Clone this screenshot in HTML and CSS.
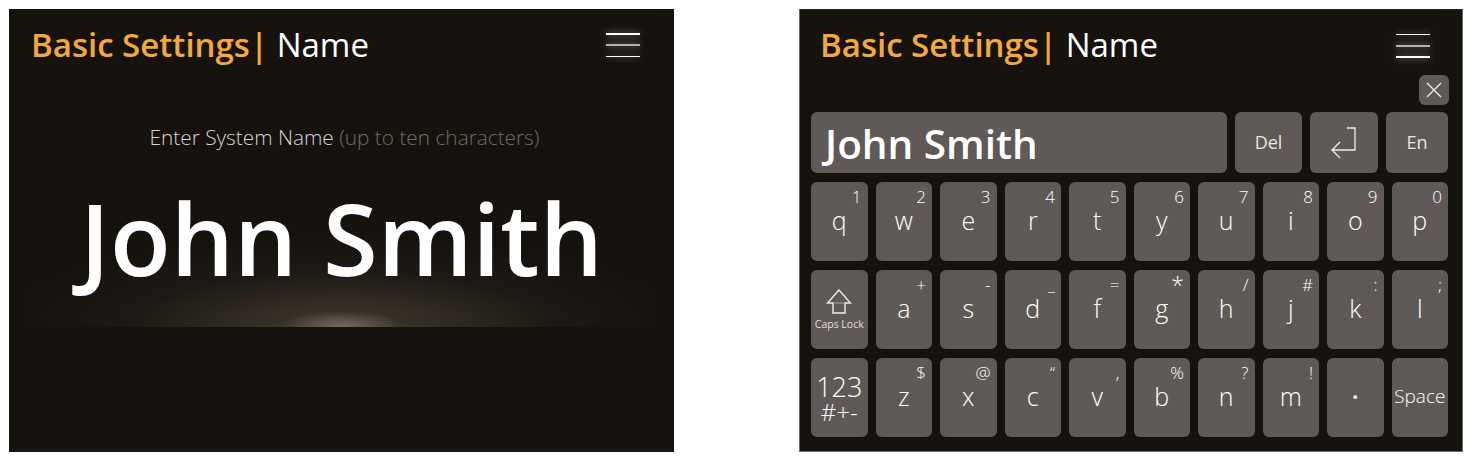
FILE: index.html
```html
<!DOCTYPE html>
<html lang="en">
<head>
    <meta charset="UTF-8">
    <title>Basic Settings - Name</title>
    <link rel="stylesheet" href="styles.css">
</head>
<body>
    <!-- Name preview screen -->
    <div class="panel panel-preview">
        <div class="header">
            <h1><span class="crumb">Basic Settings</span><span class="crumb-bar">|</span> Name</h1>
            <div class="menu"><span></span><span class="mid"></span><span></span></div>
        </div>
        <div class="preview">
            <p class="hint">Enter System Name <span class="hint-dim">(up to ten characters)</span></p>
            <p class="big-name">John Smith</p>
        </div>
    </div>

    <!-- Keyboard screen -->
    <div class="panel panel-keyboard">
        <div class="header">
            <h1><span class="crumb">Basic Settings</span><span class="crumb-bar">|</span> Name</h1>
            <div class="menu"><span></span><span class="mid"></span><span></span></div>
        </div>
        <div class="close-row">
            <div class="close-btn">
                <svg width="16" height="16" viewBox="0 0 16 16" fill="none" stroke="#f1efed" stroke-width="1.3"><path d="M1 1 15 15M15 1 1 15"/></svg>
            </div>
        </div>
        <div class="entry-row">
            <div class="entry">John Smith</div>
            <div class="key key-del">Del</div>
            <div class="key key-enter">
                <svg width="26" height="32" viewBox="0 0 26 32" fill="none" stroke="#f1efed" stroke-width="1.3"><path d="M16 1H24V23H1M9 15 1 23 9 31"/></svg>
            </div>
            <div class="key key-lang">En</div>
        </div>
        <div class="keys">
            <div class="key">q<sup>1</sup></div>
            <div class="key">w<sup>2</sup></div>
            <div class="key">e<sup>3</sup></div>
            <div class="key">r<sup>4</sup></div>
            <div class="key">t<sup>5</sup></div>
            <div class="key">y<sup>6</sup></div>
            <div class="key">u<sup>7</sup></div>
            <div class="key">i<sup>8</sup></div>
            <div class="key">o<sup>9</sup></div>
            <div class="key">p<sup>0</sup></div>

            <div class="key key-caps">
                <svg width="26" height="25" viewBox="0 0 26 25" fill="none" stroke="#f1efed" stroke-width="1.4"><path d="M13 1 1.5 14H7V24H19V14H24.5Z"/><path d="M7 14H19" stroke="#a8a4a1" stroke-width="1"/></svg>
                <span>Caps Lock</span>
            </div>
            <div class="key">a<sup>+</sup></div>
            <div class="key">s<sup>-</sup></div>
            <div class="key">d<sup>_</sup></div>
            <div class="key">f<sup>=</sup></div>
            <div class="key">g<sup class="sup-big">*</sup></div>
            <div class="key">h<sup>/</sup></div>
            <div class="key">j<sup>#</sup></div>
            <div class="key">k<sup>:</sup></div>
            <div class="key">l<sup>;</sup></div>

            <div class="key key-num">123<span>#+-</span></div>
            <div class="key">z<sup>$</sup></div>
            <div class="key">x<sup>@</sup></div>
            <div class="key">c<sup>“</sup></div>
            <div class="key">v<sup>,</sup></div>
            <div class="key">b<sup>%</sup></div>
            <div class="key">n<sup>?</sup></div>
            <div class="key">m<sup>!</sup></div>
            <div class="key key-dot">·</div>
            <div class="key key-space">Space</div>
        </div>
    </div>
</body>
</html>
```

FILE: styles.css
```css
/* Global Styles */
html, body {
    margin: 0;
    padding: 0;
}

body {
    width: 1472px;
    height: 461px;
    box-sizing: border-box;
    padding: 9px 0 0 9px;
    display: flex;
    gap: 125px;
    background: #fff;
    font-family: "Open Sans", sans-serif;
    color: #fff;
    overflow: hidden;
}

.panel {
    background: #16130f;
    box-sizing: border-box;
    height: 443px;
}

.panel-preview {
    width: 665px;
}

.panel-keyboard {
    width: 664px;
    height: 443px;
    border: 1px solid #6e6b68;
    border-top-color: #2a2724;
    padding: 0 14px 0 11px;
}

/* Header */
.header {
    display: flex;
    align-items: center;
    justify-content: space-between;
    height: 72px;
    padding: 0 34px 0 22px;
}

.panel-keyboard .header {
    height: 71px;
    padding: 0 18px 0 9px;
}

h1 {
    margin: 0;
    font-size: 33px;
    font-weight: 400;
    line-height: 72px;
    white-space: nowrap;
}

.panel-keyboard h1 {
    margin-top: -1px;
}

.crumb {
    color: #f5a83c;
    font-weight: 600;
}

.crumb-bar {
    color: #f5a83c;
    font-weight: 600;
}

.menu {
    width: 34px;
    display: flex;
    flex-direction: column;
    gap: 9.5px;
}

.menu span {
    display: block;
    height: 1.5px;
    background: #fff;
    box-shadow: 0 0 7px rgba(255, 255, 255, 0.55);
}

.menu .mid {
    height: 2px;
    background: #b5b1ac;
}

/* Preview */
.preview {
    margin: 28px 21px 0;
    height: 218px;
    background:
        radial-gradient(ellipse 62px 16px at 50% 100%, rgba(130, 120, 105, 0.8), rgba(130, 120, 105, 0) 100%),
        radial-gradient(ellipse 210px 55px at 50% 100%, rgba(80, 70, 58, 0.6), rgba(80, 70, 58, 0) 100%),
        radial-gradient(ellipse 340px 90px at 50% 100%, rgba(45, 40, 32, 0.8), rgba(45, 40, 32, 0) 100%);
    text-align: center;
}

.hint {
    margin: 0;
    padding: 15px 0 0 6px;
    font-size: 20.8px;
    font-weight: 300;
    line-height: 27px;
    color: #d8d5d2;
}

.hint-dim {
    color: #6f6b67;
}

.big-name {
    margin: 25px 0 0;
    font-size: 99.5px;
    font-weight: 600;
    line-height: 124px;
    white-space: nowrap;
}

/* Keyboard */
.close-row {
    display: flex;
    justify-content: flex-end;
    height: 30px;
    margin: -6px -1px 7px 0;
}

.close-btn {
    width: 30px;
    height: 30px;
    border-radius: 6px;
    background: #5f5a57;
    display: flex;
    align-items: center;
    justify-content: center;
}

.entry-row {
    display: flex;
    gap: 8px;
    height: 61px;
    margin-bottom: 9px;
}

.entry {
    width: 416px;
    background: #5f5a57;
    border-radius: 6px;
    padding-left: 14px;
    box-sizing: border-box;
    font-size: 40.5px;
    font-weight: 600;
    line-height: 64px;
}

.entry-row .key-del {
    width: 67px;
    padding-bottom: 1px;
    box-sizing: border-box;
    font-size: 18px;
    font-weight: 400;
    color: #e8e6e4;
}

.entry-row .key-enter {
    width: 68px;
}

.entry-row .key-lang {
    width: 62px;
    padding-bottom: 1px;
    box-sizing: border-box;
    font-size: 18px;
    font-weight: 400;
    color: #e8e6e4;
}

.keys {
    display: grid;
    grid-template-columns: repeat(10, 1fr);
    grid-auto-rows: 79px;
    gap: 9px 8px;
}

.key {
    position: relative;
    background: #5f5a57;
    border-radius: 6px;
    display: flex;
    align-items: center;
    justify-content: center;
    font-size: 25px;
    font-weight: 300;
    line-height: 1;
    color: #fff;
}

.keys > .key {
    padding-bottom: 2px;
    box-sizing: border-box;
}

.key sup {
    position: absolute;
    top: 5px;
    right: 6px;
    font-size: 17px;
    font-weight: 300;
    line-height: 20px;
}

.key sup.sup-big {
    font-size: 23px;
}

.keys > .key-caps {
    flex-direction: column;
    gap: 3px;
    padding-bottom: 0;
}

.key-caps span {
    font-size: 10.5px;
    line-height: 14px;
    font-weight: 400;
    color: #e2dfdc;
}

.keys > .key-num {
    flex-direction: column;
    padding: 2px 0 0;
    font-size: 27px;
    line-height: 27px;
}

.key-num span {
    font-size: 24px;
    line-height: 24px;
}

.keys .key-dot {
    font-weight: 600;
}

.keys .key-space {
    font-size: 19px;
    font-weight: 300;
}
```
